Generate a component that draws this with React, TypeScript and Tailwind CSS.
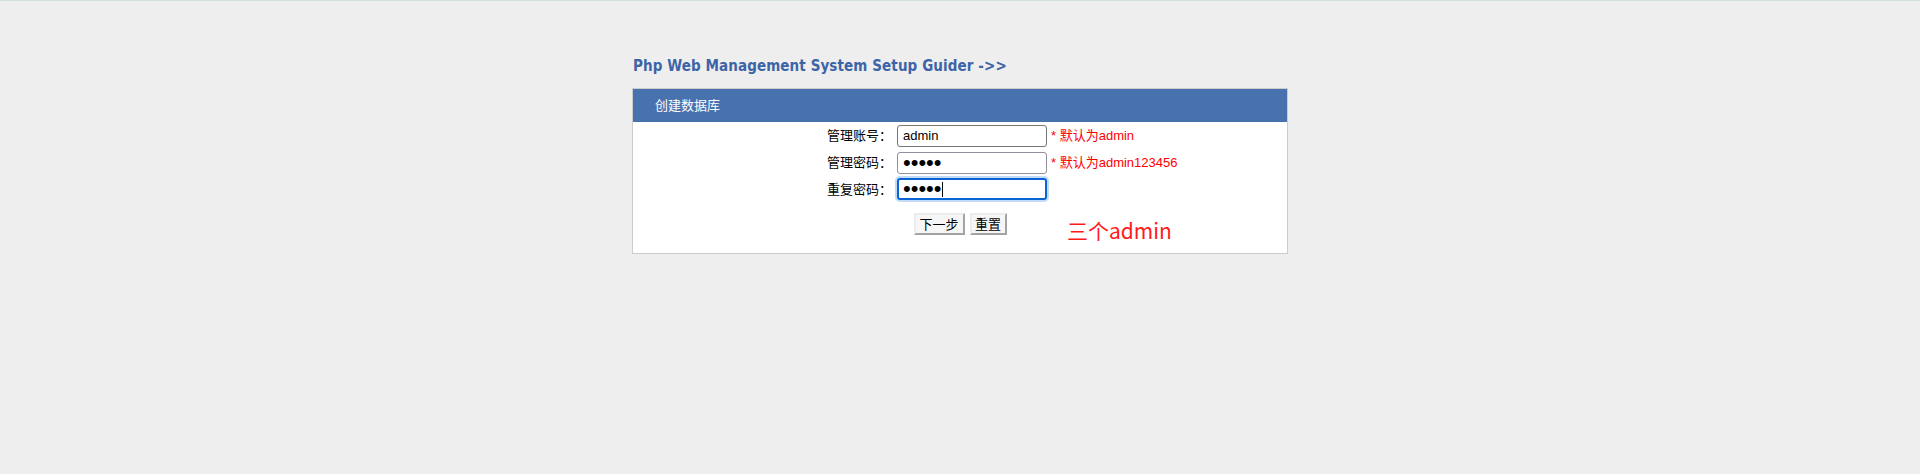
import React, { useState } from 'react';

const font = { fontFamily: '"Liberation Sans", "Noto Sans CJK SC", sans-serif' };

const App: React.FC = () => {
  const [account, setAccount] = useState('admin');
  const [password, setPassword] = useState('admin');
  const [repeat, setRepeat] = useState('admin');

  const handleReset = () => {
    setAccount('');
    setPassword('');
    setRepeat('');
  };

  return (
    <div className="min-h-[474px] bg-[#eeeeee] border-t border-[#cfe1d6]" style={font}>
      <div className="w-[656px] mx-auto pt-[55px]">
        {/* Title */}
        <h1
          className="text-[15px] font-bold text-[#3c64a7] leading-[20px] pl-[1px] tracking-[0.1px]"
          style={{ fontFamily: '"DejaVu Sans Condensed", "DejaVu Sans", sans-serif' }}
        >
          Php Web Management System Setup Guider -&gt;&gt;
        </h1>

        {/* Panel */}
        <div className="relative mt-[12px] bg-white border border-[#cccccc]">
          <div className="h-[33px] bg-[#4872ae] flex items-center pl-[22px] text-[13px] text-white">
            创建数据库
          </div>

          <div className="text-[13px] text-black">
            <div className="h-[27px] flex items-center">
              <div className="w-[259px] text-right">管理账号：</div>
              <input
                type="text"
                value={account}
                onChange={(e) => setAccount(e.target.value)}
                className="ml-[5px] w-[150px] h-[22px] px-[5px] border border-[#767676] rounded-[3px] text-[13px] outline-none"
                style={font}
              />
              <span className="ml-[4px] text-[#ff0000]">* 默认为admin</span>
            </div>
            <div className="h-[27px] flex items-center">
              <div className="w-[259px] text-right">管理密码：</div>
              <input
                type="password"
                value={password}
                onChange={(e) => setPassword(e.target.value)}
                className="ml-[5px] w-[150px] h-[22px] px-[5px] py-0 border border-[#8f8f9d] rounded-[3px] text-[22px] leading-none outline-none"
                style={font}
              />
              <span className="ml-[4px] text-[#ff0000]">* 默认为admin123456</span>
            </div>
            <div className="h-[27px] flex items-center">
              <div className="w-[259px] text-right">重复密码：</div>
              <div className="relative ml-[5px]">
                <input
                  type="password"
                  value={repeat}
                  onChange={(e) => setRepeat(e.target.value)}
                  className="w-[150px] h-[22px] px-[4px] py-0 border-2 border-[#0b63d6] rounded-[3px] text-[22px] leading-none outline-none shadow-[0_0_0_2px_#c2dcf8]"
                  style={font}
                />
                <span className="absolute left-[45px] top-[4px] w-[1px] h-[15px] bg-black" />
              </div>
            </div>

            <div className="mt-[10px] pb-[18px] flex justify-center gap-[5px]">
              <button
                type="button"
                className="w-[51px] h-[22px] bg-[#f6f6f6] border-2 border-t-[#ececec] border-l-[#ececec] border-r-[#a3a3a3] border-b-[#a3a3a3] text-[13px] text-black leading-none"
              >
                下一步
              </button>
              <button
                type="button"
                onClick={handleReset}
                className="w-[37px] h-[22px] bg-[#f6f6f6] border-2 border-t-[#ececec] border-l-[#ececec] border-r-[#a3a3a3] border-b-[#a3a3a3] text-[13px] text-black leading-none"
              >
                重置
              </button>
            </div>
          </div>

          {/* annotation */}
          <span
            className="absolute left-[434px] top-[129px] text-[21px] leading-[24px] text-[#ff1a1a]"
            style={{ fontFamily: '"Noto Sans CJK SC", sans-serif' }}
          >
            三个admin
          </span>
        </div>
      </div>
    </div>
  );
};

export default App;
